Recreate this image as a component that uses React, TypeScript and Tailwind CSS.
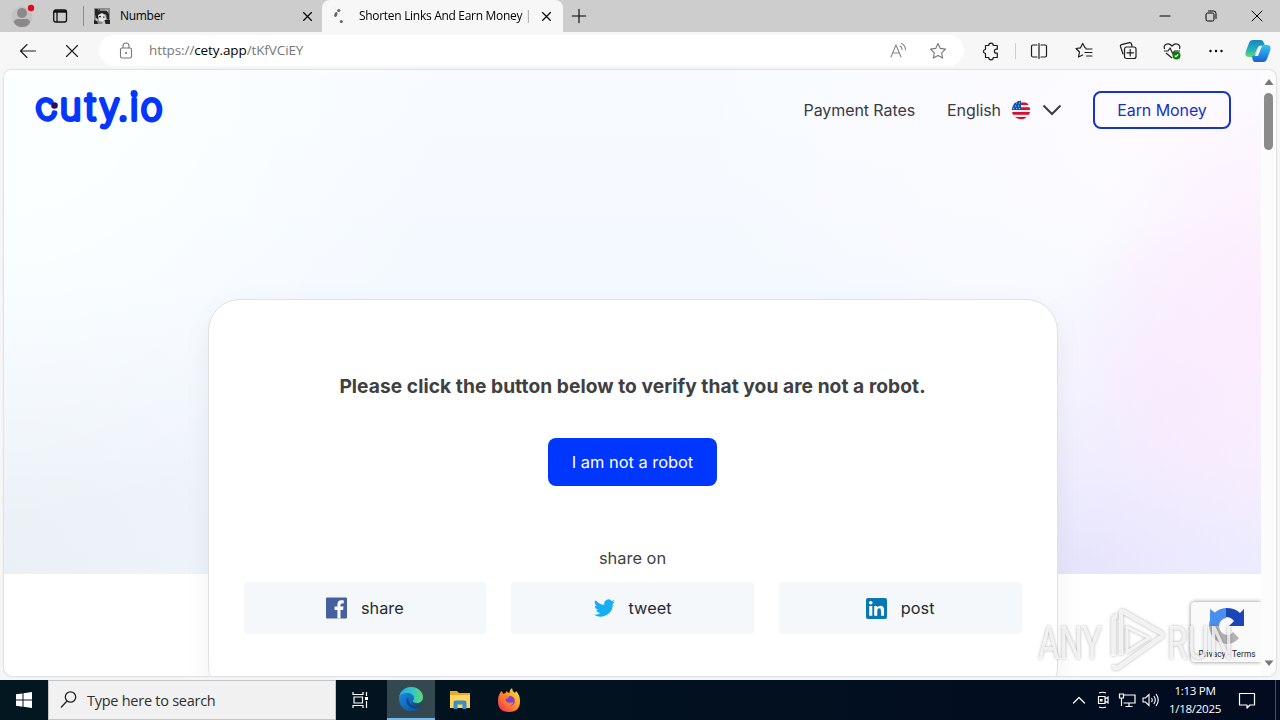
import React from "react";

const ui = "font-['Open_Sans','Noto_Sans',sans-serif]";

function Line({ d, size = 20, w = 1.2, className = "" }: { d: string; size?: number; w?: number; className?: string }) {
  return (
    <svg width={size} height={size} viewBox="0 0 20 20" fill="none" stroke="currentColor" strokeWidth={w} strokeLinecap="round" strokeLinejoin="round" className={`shrink-0 ${className}`}>
      <path d={d} />
    </svg>
  );
}

const STAR = "M10 2.500l2.300 4.900 5.200.7-3.800 3.700.9 5.300L10 14.600l-4.600 2.500.9-5.300L2.500 8.100l5.200-.7z";
const CROSS = "M5.800 5.800l8.400 8.400M14.200 5.800l-8.400 8.400";

function Portrait() {
  return (
    <svg width="16" height="16" viewBox="0 0 16 16" className="shrink-0">
      <path fill="#8b8b8b" d="M0 0h16v16H0z" />
      <path fill="#232323" d="M1 1h3v2h9l2 3v6l-2-1-1-5-4 1-4 4-2-1-1-4zM10 12h6v4h-4zM0 12l3 1 1 3H0z" />
      <path fill="#e4e4e4" d="M4 7l4-2 3 2 1 4-3 3-4-1z" />
      <path fill="#333" d="M5 8h2v1.300H5zM9 8.500h1.500v1.300H9zM3 3l3-2v4z" />
      <path fill="#c9c9c9" d="M11 1l3 1v2zM2 10l2 2-2 1zM9 14l2-1v3H8z" />
    </svg>
  );
}

function TabStrip() {
  return (
    <div className="flex h-8 shrink-0 items-center bg-[#cdcdcd] text-[12px] tracking-[-0.3px] text-black">
      <svg width="32" height="32" viewBox="0 0 32 32" className="ml-1.5 shrink-0">
        <circle cx="16" cy="17" r="10.500" fill="#c2c2c2" />
        <circle cx="16" cy="13" r="5" fill="#8b8988" />
        <path d="M8 22.500q0-3.500 3.500-3.500h9q3.500 0 3.500 3.500-2.500 4.500-8 4.500t-8-4.500z" fill="#8b8988" />
        <circle cx="25" cy="8" r="3.200" fill="#e00b1c" />
      </svg>
      <svg width="16" height="16" viewBox="0 0 16 16" fill="none" stroke="#111" strokeWidth="1.300" className="ml-3.5 shrink-0">
        <rect x="1.700" y="2" width="12.800" height="12" rx="2" />
        <path d="M2 3.500h12" strokeWidth="2.400" />
        <path d="M5 4v10" />
      </svg>
      <div className="ml-[15px] h-5 w-px bg-[#8c8c8c]" />
      <div className="ml-2.5 flex w-[228px] items-center pr-[5px]">
        <Portrait />
        <span className="ml-2.5 grow">Number</span>
        <Line d={CROSS} size={19} />
      </div>
      <div className="flex h-8 w-[241px] items-center rounded-t-lg bg-[#f7f7f7] pl-2">
        <svg width="16" height="18" viewBox="0 0 16 18" fill="#666" className="shrink-0">
          <circle cx="8.800" cy="3.500" r="1.600" />
          <ellipse cx="6" cy="7.500" rx="1.500" ry="2.600" transform="rotate(20 6 7)" />
          <circle cx="11.300" cy="14.500" r="1.500" />
        </svg>
        <span className="ml-[13px] w-[175px] overflow-hidden whitespace-nowrap [mask-image:linear-gradient(90deg,#000_92%,transparent)]">Shorten Links And Earn Money | cuty</span>
        <Line d={CROSS} size={19} className="ml-[3px]" />
      </div>
      <Line d="M10 2.500v15M2.500 10h15" size={18} className="ml-[7px]" />
      <div className="ml-auto flex items-center gap-[26px] pr-[13px]">
        <Line d="M5 10h10" />
        <Line d="M5 8.500a1.500 1.500 0 0 1 1.500-1.500h5a1.500 1.500 0 0 1 1.500 1.500v5a1.500 1.500 0 0 1-1.500 1.500h-5a1.500 1.500 0 0 1-1.500-1.500zM7.500 5h5a2.500 2.500 0 0 1 2.500 2.500v5" w={1} />
        <Line d="M5 5l10 10M15 5L5 15" w={1} />
      </div>
    </div>
  );
}

function Toolbar() {
  return (
    <div className="flex h-[37px] shrink-0 items-center bg-[#f7f7f7] pl-[18px] text-[#1c1c1c]">
      <Line d="M17.500 10H2.500M9 3.500L2.500 10l6.500 6.500" w={1.100} />
      <Line d="M4.500 4.500l11 11M15.500 4.500l-11 11" w={1.100} className="ml-6" />
      <div className="ml-[17px] flex h-[31px] w-[865px] items-center rounded-full bg-white pr-4 pl-[17px] text-[#777]">
        <svg width="20" height="20" viewBox="0 0 20 20" fill="none" stroke="#777" strokeWidth="1.100">
          <rect x="4.500" y="7" width="11" height="10" rx="1.500" />
          <path d="M7 7V5a3 3 0 0 1 6 0v2" />
          <circle cx="10" cy="12" r=".5" fill="#777" />
        </svg>
        <span className="ml-[13px] text-[13.500px] tracking-[-0.1px]">
          https://<span className="text-black">cety.app</span>/tKfVCiEY
        </span>
        <svg width="20" height="20" viewBox="0 0 20 20" fill="none" stroke="#888" strokeWidth="1.100" strokeLinecap="round" className="ml-auto">
          <path d="M3 16L8 4l5 12M4.800 12h6.400M12 5q2 1 2 3.500M13.500 2.500q4 2 4 6.500" />
        </svg>
        <Line d={STAR} className="ml-5" w={1.100} />
      </div>
      <Line d="M4.500 4.500h3.200a2.300 2.300 0 0 1 4.600 0h4v3.700h-.9a2 2 0 0 0 0 4h.9v4.300h-4a2.300 2.300 0 0 1-4.600 0H4.500v-4a2 2 0 0 1 0-4z" className="ml-[17px]" />
      <div className="ml-3.5 h-4 w-px bg-[#ccc]" />
      <Line d="M8 4H4a1.500 1.500 0 0 0-1.500 1.500v9A1.500 1.500 0 0 0 4 16h4M12 4h4a1.500 1.500 0 0 1 1.500 1.500v9A1.500 1.500 0 0 1 16 16h-4M10 2.500v15" className="ml-[13px]" />
      <Line d="M12 7l-1-.2-2.300-4.300-2.200 4.300-4.500.7 3.500 3.500-1 5 4.200-2M12 8h6M11 11.500h7M12.500 15H18" className="ml-[25px]" />
      <Line d="M5 13l-2.500-7.500Q2 4 3.500 3.600l8-2Q13 1.300 13.500 3l.5 2M8 6h8a2 2 0 0 1 2 2v7.500a2 2 0 0 1-2 2H8.500a2 2 0 0 1-2-2V8A2 2 0 0 1 8 6zM12.200 8.500v6.500M9 11.800h6.500" className="ml-[24px]" />
      <svg width="20" height="20" viewBox="0 0 20 20" fill="none" stroke="#222" strokeWidth="1.200" strokeLinejoin="round" className="ml-[24px] shrink-0">
        <path d="M2.500 8C1 4 6 .5 10 5c4-4.500 9-1 7.500 3M2 10h4l2-3 3 6 1.500-3H18M4 12l6 5" />
        <circle cx="14.500" cy="14.500" r="4" fill="#107c10" stroke="none" />
        <path d="M12.800 14.600l1.200 1.100 2.200-2.300" stroke="#fff" />
      </svg>
      <svg width="20" height="20" viewBox="0 0 20 20" className="ml-[24px] shrink-0">
        <circle cx="4.500" cy="10" r="1.200" /><circle cx="10" cy="10" r="1.200" /><circle cx="15.500" cy="10" r="1.200" />
      </svg>
      <svg width="26" height="26" viewBox="0 0 26 26" className="ml-[19px] shrink-0">
        <defs>
          <linearGradient id="cpa" x1="0" y1="0" x2="0" y2="1"><stop stopColor="#1684c9" /><stop offset=".6" stopColor="#24b5b4" /><stop offset="1" stopColor="#68dc65" /></linearGradient>
          <linearGradient id="cpb" x1="0" y1="0" x2="0" y2="1"><stop stopColor="#31c5ef" /><stop offset="1" stopColor="#1862d4" /></linearGradient>
        </defs>
        <path d="M8 2h8q2 0 3 3l1 3h-4q-3 0-4 3l-2 5q-1 3-4 3H4q-5 0-3-6l3-8q1-3 4-3z" fill="url(#cpa)" />
        <path d="M18 24h-8q-2 0-2.500-3L7 18q3 0 4-3l2-5q1-3 4-3h5q5 0 3 6l-3 8q-1 3-4 3z" fill="url(#cpb)" />
        <path d="M14 8h3l-4 10h-3z" fill="#fff" />
      </svg>
    </div>
  );
}

function Logo() {
  return (
    <svg width="136" height="48" viewBox="30 86 136 48" className="shrink-0 overflow-visible font-['Inter',sans-serif] font-extralight" fill="#0537fb" stroke="#0537fb" strokeWidth="4" strokeLinejoin="round" textAnchor="middle">
      <text y="122.300 120 120 120 120 120 120" fontSize="37" x="49.300 70.500 90.500 109.500 123 134 151.500" rotate="-18 0 0 0 0 0 0">cuty.io</text>
      <g stroke="none">
        <circle cx="123" cy="119" r="3.300" />
        <circle cx="134" cy="93.300" r="3.300" />
        <circle cx="54.500" cy="105.500" r="3.300" fill="#2b0f55" />
      </g>
    </svg>
  );
}

function Flag() {
  return (
    <svg width="20" height="20" viewBox="0 0 20 20" className="ml-2.5">
      <clipPath id="flag"><circle cx="10" cy="10" r="9.200" /></clipPath>
      <g clipPath="url(#flag)">
        <path fill="#f3eff0" d="M0 0h20v20H0z" />
        <path fill="#d80f30" d="M0 2.500h20v2.600H0zM0 7.300h20v2.600H0zM0 12.100h20v2.600H0zM0 17h20v3H0z" />
        <path fill="#1556a8" d="M0 0h10v9.900H0z" />
        <path stroke="#9fc5ee" strokeWidth="1" strokeDasharray="1 2" d="M2 3h8M1 6h9M2 8.500h8" />
      </g>
    </svg>
  );
}

function Share({ icon, label }: { icon: React.ReactNode; label: string }) {
  return (
    <div className="flex h-[52px] flex-1 items-center justify-center gap-3.5 rounded-[4px] bg-[#f4f8fb] text-[16.300px] text-[#262b30]">
      {icon}
      <span>{label}</span>
    </div>
  );
}

function Recaptcha() {
  return (
    <div className="absolute top-[532px] right-[15px] flex h-[60px] w-[70px] flex-col items-center rounded-l-sm bg-[#fafafa] pt-1 pl-0.5 shadow-[0_0_4px_#888] [clip-path:inset(-5px_0_-5px_-5px)]">
      <svg width="40" height="40" viewBox="0 0 40 40">
        <path d="M2 20A18 18 0 0 1 19 2v10a9 9 0 0 0-7 8z" fill="#4a8ef0" />
        <path d="M3 3l7 5-7 8z" fill="#4a8ef0" />
        <path d="M19 2q9 0 14 5l4-4v17H22l5-5q-3-4-8-4z" fill="#1c45b5" />
        <path d="M2 20h10q1 8 8 9 4 0 6-3l6 6q-5 6-12 6Q4 37 2 20z" fill="#b3b3b3" />
      </svg>
      <span className="mt-0.5 font-['Roboto',sans-serif] text-[8.300px] leading-3 tracking-[0.05px] text-[#222]">Privacy - Terms</span>
    </div>
  );
}

function Watermark() {
  return (
    <svg width="206" height="72" viewBox="1034 603 206 72" className="absolute top-[533px] right-[36px] overflow-visible font-['Roboto',sans-serif] drop-shadow-[0_0_1.500px_rgba(0,0,0,0.400)]" fill="#fff" fillOpacity=".75">
      <text x="1038" y="659" fontSize="47" textLength="64" lengthAdjust="spacingAndGlyphs">ANY</text>
      <g fill="none" stroke="#fff" strokeOpacity=".8" strokeWidth="4.500" strokeLinejoin="round">
        <path d="M1113.500 656V620q0-4 4-4" />
        <path d="M1121 655V613q0-3 3-1l37 21q3 2 0 4l-42 30q-5 3-5-2" />
        <path d="M1127 627l22 11-22 14z" strokeWidth="3" />
      </g>
      <text x="1167" y="659" fontSize="47" textLength="66" lengthAdjust="spacingAndGlyphs">RUN</text>
    </svg>
  );
}

function Page() {
  return (
    <div className="relative mx-1 mt-px flex h-[606px] shrink-0 overflow-hidden rounded-lg bg-white shadow-[0_0_2px_#aaa]">
      <div className="h-[504px] w-[1257px] shrink-0 bg-[radial-gradient(ellipse_160px_240px_at_99%_48%,#fcecfd_0%,transparent_100%),radial-gradient(ellipse_170px_190px_at_94%_66%,#f5e9fd_0%,transparent_100%),radial-gradient(ellipse_220px_170px_at_86%_98%,#e6e4fc_0%,transparent_100%),radial-gradient(ellipse_200px_160px_at_100%_100%,#ecedff_0%,transparent_100%),radial-gradient(ellipse_450px_450px_at_0%_0%,#fbffff_0%,#fbffff_25%,transparent_100%),radial-gradient(ellipse_480px_300px_at_93%_12%,#fdfbff_0%,transparent_100%),radial-gradient(ellipse_350px_330px_at_0%_100%,#eaf0f4_0%,transparent_100%),linear-gradient(#f7fbff,#f0f5ff)]">
        <header className="flex h-20 items-center pr-[30px] pl-[26px] text-[16px] tracking-[-0.080px] text-[#3b3b42]">
          <Logo />
          <span className="ml-auto">Payment Rates</span>
          <span className="ml-8">English</span>
          <Flag />
          <svg width="20" height="12" viewBox="0 0 20 12" fill="none" stroke="#3c3c3c" strokeWidth="2" className="ml-[11px]"><path d="M1.500 1.500L10 10l8.500-8.500" /></svg>
          <span className="ml-[31px] flex h-[38px] w-[138px] items-center justify-center rounded-lg border-2 border-[#1635c4] text-[#1533c0]">Earn Money</span>
        </header>
        <main className="mx-auto mt-[149px] flex h-[400px] w-[850px] flex-col items-center rounded-[32px] border border-[#dfe1e8] bg-white px-[35px] text-[#404040] shadow-[0_8px_28px_rgba(0,0,40,0.06)]">
          <h1 className="mt-[72px] text-[19.200px] leading-7 font-bold tracking-[0.050px] whitespace-nowrap">Please click the button below to verify that you are not a robot.</h1>
          <button className="mt-[38px] h-12 w-[169px] rounded-lg bg-[#0037ff] text-[16.400px] text-white">I am not a robot</button>
          <p className="mt-[60px] text-[16.400px] leading-6">share on</p>
          <div className="mt-3 flex w-full gap-[25px]">
            <Share label="share" icon={<svg width="21" height="22" viewBox="0 0 22 22"><rect width="22" height="22" rx="1" fill="#465f9f" /><path fill="#fff" d="M12 22v-9H9V9.500h3V7q0-4.200 4.200-4.200h2.300v3.500h-1.700q-1.600 0-1.600 1.500v1.700h3.200l-.5 3.500h-2.700v9z" /></svg>} />
            <Share label="tweet" icon={<svg width="21" height="18" viewBox="0 0 24 20"><path fill="#15aef0" d="M24 2.600a10 10 0 0 1-2.800.8A5 5 0 0 0 23.300.700a10 10 0 0 1-3.100 1.200 4.900 4.900 0 0 0-8.400 4.500A14 14 0 0 1 1.700 1.200a4.900 4.900 0 0 0 1.500 6.600 5 5 0 0 1-2.200-.6 4.900 4.900 0 0 0 3.900 4.900 5 5 0 0 1-2.200.1 4.900 4.900 0 0 0 4.600 3.400A10 10 0 0 1 0 17.600 14 14 0 0 0 21.500 5.200 10 10 0 0 0 24 2.600z" /></svg>} />
            <Share label="post" icon={<svg width="21" height="21" viewBox="0 0 22 22"><rect width="22" height="22" rx="2" fill="#0878b4" /><circle cx="5" cy="5" r="1.900" fill="#fff" /><path fill="#fff" d="M3.400 8.300h3.200v10.400H3.400zM8.600 8.300h3v1.500q1.200-1.800 3.500-1.800 3.800 0 3.800 4.700v6h-3.200v-5.400q0-2.500-1.800-2.500-2.100 0-2.100 2.500v5.400H8.600z" /></svg>} />
          </div>
        </main>
      </div>
      <div className="flex h-full w-[15px] flex-col items-center bg-[#fcfcfc] pt-[9px] pb-[10px]">
        <svg width="10" height="7" viewBox="0 0 10 7"><path d="M5 0l4.500 6h-9z" fill="#777" /></svg>
        <div className="mt-[7px] h-[57px] w-[9px] rounded-full bg-[#8b8b8b]" />
        <svg width="10" height="6" viewBox="0 0 10 6" className="mt-auto"><path d="M5 6l4.500-5.500h-9z" fill="#777" /></svg>
      </div>
      <Recaptcha />
      <Watermark />
    </div>
  );
}

function Taskbar() {
  return (
    <div className="mt-auto flex h-10 shrink-0 items-center bg-linear-to-r from-[#02171f] to-[#020b20] text-white">
      <svg width="48" height="40" viewBox="0 0 48 40" fill="#fff" className="shrink-0">
        <path d="M16 14.300l6.500-.9V19.500H16zM23.500 13.200l8.500-1.200v7.500h-8.500zM16 20.500h6.500v6.200l-6.500-.9zM23.500 20.500H32V28l-8.500-1.200z" />
      </svg>
      <div className="flex h-10 w-[288px] shrink-0 items-center border border-[#c2c4c5] bg-[#f1f1f1] pl-2.5 text-[#2f2f2f]">
        <svg width="20" height="20" viewBox="0 0 20 20" fill="none" stroke="#222" strokeWidth="1.300"><circle cx="11.500" cy="7" r="5.200" /><path d="M8 11l-6 6.500" /></svg>
        <span className="mt-0.5 ml-2 text-[14.500px] tracking-[-0.260px]">Type here to search</span>
      </div>
      <svg width="51" height="40" viewBox="-1 0 51 40" fill="none" stroke="#fff" strokeWidth="1.200" className="shrink-0">
        <path d="M16 12v2.500h10V12M16 28v-2.500h10V28M17 17h8.500v6H17zM29.500 12v4M29.500 21v7" /><path d="M28 17h3v3h-3z" fill="#fff" stroke="none" />
      </svg>
      <div className="flex h-10 w-12 shrink-0 items-center justify-center border-b-2 border-[#76b9ed] bg-[#344850]">
        <svg width="26" height="26" viewBox="0 0 26 26">
          <defs>
            <linearGradient id="ea" x1="0" x2="1"><stop stopColor="#27a9e8" /><stop offset=".6" stopColor="#36c6c4" /><stop offset="1" stopColor="#62dc65" /></linearGradient>
            <linearGradient id="eb" x1="0" x2="1" y2="1"><stop stopColor="#1b8fe0" /><stop offset="1" stopColor="#0d4f9c" /></linearGradient>
          </defs>
          <circle cx="13" cy="13" r="12" fill="url(#eb)" />
          <path d="M1 12C2 5 7 1 13 1c7 0 12 5 12 10 0 4-3 6-6 6s-4-1-4-2 1-1.500 1-3c0-3-3-5-7-5-5 0-8 3-8 5z" fill="url(#ea)" />
          <path d="M9 12c-2 6 3 11 9 11 3-1 5-3 6-5-2 1-4 1.500-6 1.500-5 0-8-3-7.500-7z" fill="#0b4a91" />
          <path d="M15 15q-1.500 3 4 2.500 4 0 6-4l-.5 4.500q-4 2-7.500 1-4-1-2-4z" fill="#344850" />
        </svg>
      </div>
      <svg width="22" height="20" viewBox="0 0 22 20" className="ml-[14px] shrink-0">
        <path d="M1 1h7l2 2h11v5H1z" fill="#e9a92b" /><path d="M1 5h20v13H1z" fill="#ffd65e" /><path d="M4.500 19v-6.500q0-2 2-2h9q2 0 2 2V19h-4v-4.500h-5V19z" fill="#3c8ec9" />
      </svg>
      <svg width="24" height="26" viewBox="0 0 24 26" className="ml-[26px] shrink-0">
        <defs><linearGradient id="ff" x1="1" x2="0" y2="1"><stop stopColor="#fff04d" /><stop offset=".45" stopColor="#ff9427" /><stop offset="1" stopColor="#f5215c" /></linearGradient></defs>
        <path d="M3 6l1.500-2 2 3 2-1 1-2q1 2 3 2Q12 3 15 1q0 3 3 5l1-2q4 4 4 10 0 11-11 11T1 14q0-5 2-8z" fill="url(#ff)" />
        <circle cx="12.500" cy="14" r="5.300" fill="#7943cf" /><path d="M4 10q5-3 8.500-.5-1 2-4 2.500 0 3 3 3.500 3 1 5-1-1 5-5.500 5-6-2-7-9.500z" fill="#ff7a2f" />
      </svg>
      <Line d="M4.500 13L10 7.500l5.500 5.500" className="ml-auto" />
      <svg width="18" height="20" viewBox="0 0 18 20" fill="none" stroke="#fff" strokeWidth="1.200" className="ml-[5px] shrink-0"><path d="M5 3q3.500-1.500 7 0M5 17q3.500 1.500 7 0M4.500 6.500H11v7H4.500zM11 9l3-2v6l-3-2M6.500 9.500H8v1.500H6.500z" /></svg>
      <svg width="20" height="20" viewBox="0 0 20 20" fill="none" stroke="#fff" strokeWidth="1.200" className="ml-[5px] shrink-0"><path d="M7 5h11v8H6.500M12 13v3.500M8.500 16.500h7M2.500 4h4v4h-4zM4.500 8v8" /></svg>
      <svg width="20" height="20" viewBox="0 0 20 20" fill="none" stroke="#fff" strokeWidth="1.100" className="ml-1 shrink-0"><path d="M2 8h2.500L8 4.500v11L4.500 12H2zM10.500 8q1.500 2 0 4M12.800 6q3 4 0 8M15 4q4.500 6 0 12" /></svg>
      <div className="ml-[5px] w-[58px] text-center text-[11.600px] leading-[18px] tracking-[-0.300px] whitespace-nowrap">
        <div>1:13 PM</div>
        <div>1/18/2025</div>
      </div>
      <Line d="M2.500 3.500h15v11.500H13l-3 3v-3H2.500z" className="mr-[18px] ml-[13px]" />
      <div className="h-10 w-px bg-[#46505f]" /><div className="w-1" />
    </div>
  );
}

export default function App() {
  return (
    <div className={`flex h-[720px] w-[1280px] flex-col overflow-hidden bg-[#f4f6f7] ${ui}`}>
      <TabStrip />
      <Toolbar />
      <div className="font-['Inter',sans-serif]">
        <Page />
      </div>
      <Taskbar />
    </div>
  );
}
